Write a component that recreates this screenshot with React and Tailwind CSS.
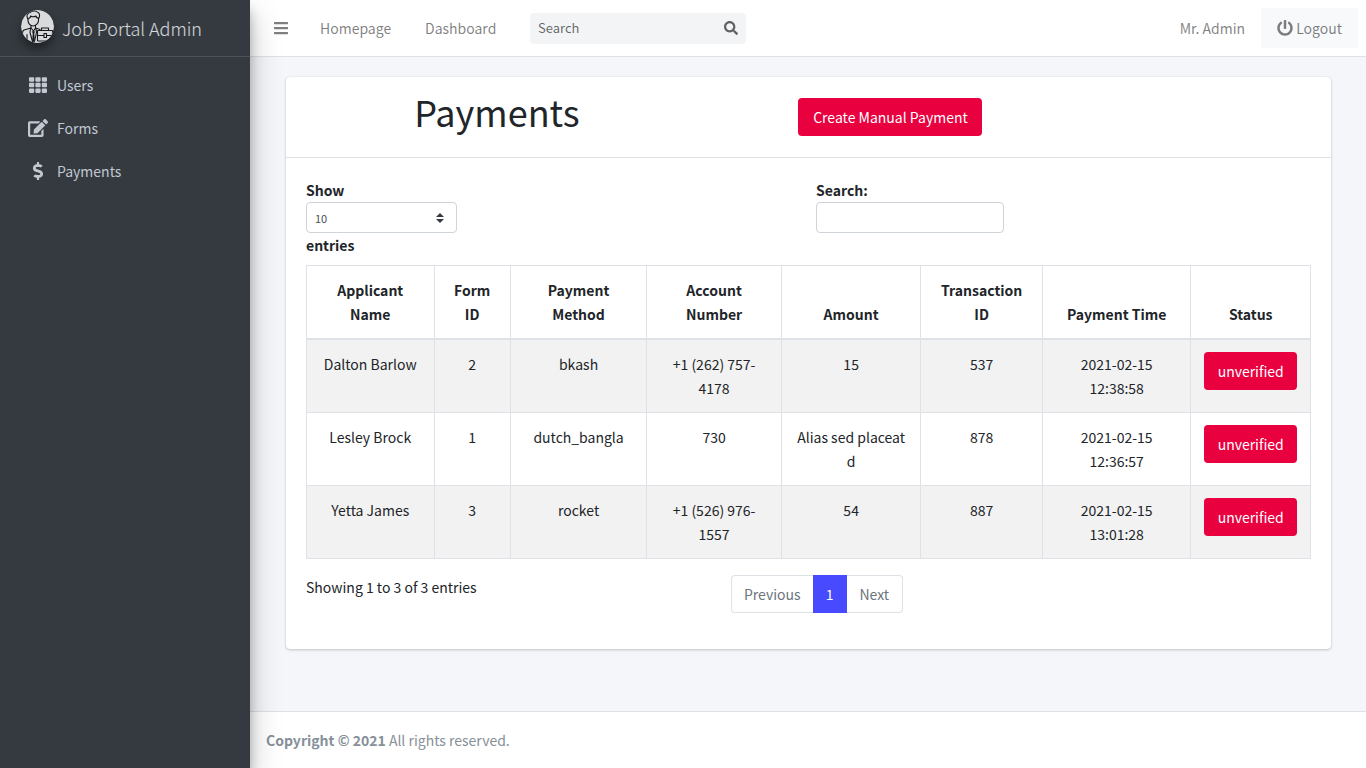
import React from "react";
import { FaBars, FaDollarSign, FaEdit, FaPowerOff, FaSearch, FaTh } from "react-icons/fa";

const NAV = [
  { label: "Users", Icon: FaTh, size: "size-[18px]" },
  { label: "Forms", Icon: FaEdit, size: "size-5" },
  { label: "Payments", Icon: FaDollarSign, size: "size-[18px]" },
];

const COLUMNS = [
  { label: "Applicant Name", width: "w-[12.7%]" },
  { label: "Form ID", width: "w-[7.6%]" },
  { label: "Payment Method", width: "w-[13.6%]" },
  { label: "Account Number", width: "w-[13.4%]" },
  { label: "Amount", width: "w-[13.9%]" },
  { label: "Transaction ID", width: "w-[12.1%]" },
  { label: "Payment Time", width: "w-[14.8%]" },
  { label: "Status", width: "w-[11.9%]" },
];

const ROWS = [
  ["Dalton Barlow", "2", "bkash", "+1 (262) 757-4178", "15", "537", "2021-02-15 12:38:58"],
  ["Lesley Brock", "1", "dutch_bangla", "730", "Alias sed placeat d", "878", "2021-02-15 12:36:57"],
  ["Yetta James", "3", "rocket", "+1 (526) 976-1557", "54", "887", "2021-02-15 13:01:28"],
];

function Logo() {
  return (
    <svg viewBox="0 0 66 66" className="size-[33px] shrink-0 rounded-full shadow-[0_6px_10px_rgba(0,0,0,0.4)]" aria-hidden="true">
      <defs>
        <clipPath id="logo-disc">
          <circle cx="33" cy="33" r="33" />
        </clipPath>
      </defs>
      <g clipPath="url(#logo-disc)" fill="none" stroke="#15181b" strokeWidth="2.2" strokeLinecap="round" strokeLinejoin="round">
        <rect width="66" height="66" fill="#d8dadc" stroke="none" />
        <path d="M14 18c-4-6-2-12 4-13 4-4 13-4 16 0 4 1 4 8 1 13" />
        <path d="M14 17v4c0 6 5 11 10 11s11-5 11-11v-5c-3 0-5-2-5-4-4 2-8 2-11 0 0 3-2 5-5 5z" />
        <path d="M20 31v5L6 40c-2 1-3 3-3 6v20M29 31v5l9 3" />
        <path d="M20 36l5 6 4-6M19 37l-1 8 5 18M30 37l1 8-4 18M12 49v17" />
        <path d="M23 43h4l-1 5 1 12-2 4-2-4 1-12z" fill="#15181b" strokeWidth="1" />
        <rect x="33" y="41" width="30" height="21" rx="1" fill="#d8dadc" />
        <path d="M41 41v-5h14v5M33 51h13M51 51h12" />
        <rect x="46" y="47" width="5" height="8" fill="#d8dadc" />
      </g>
    </svg>
  );
}

function Sidebar() {
  return (
    <aside className="z-10 w-[250px] shrink-0 bg-[#343a40] shadow-[0_14px_28px_rgba(0,0,0,0.25),0_10px_10px_rgba(0,0,0,0.22)]">
      <a href="#" className="flex h-[57px] items-start gap-2 border-b border-[#4b545c] pt-2.5 pl-[21px] text-lg/9 font-light text-white/80">
        <Logo />
        <span>Job Portal Admin</span>
      </a>
      <nav className="flex flex-col gap-[3px] p-2">
        {NAV.map(({ label, Icon, size }) => (
          <a key={label} href="#" className="flex h-10 items-center gap-1.5 pl-4 text-[#c2c7d0]">
            <span className="flex w-[27px] justify-center">
              <Icon className={size} />
            </span>
            {label}
          </a>
        ))}
      </nav>
    </aside>
  );
}

function Navbar() {
  return (
    <header className="flex h-[57px] items-center border-b border-[#dee2e6] bg-white px-2 text-black/50">
      <button type="button" aria-label="Toggle menu" className="flex w-[46px] justify-center">
        <FaBars className="size-4" />
      </button>
      <a href="#" className="w-[105px] pl-4">Homepage</a>
      <a href="#" className="w-[105px] pl-4">Dashboard</a>
      <form className="ml-4 flex h-[31px] w-[216px] rounded bg-[#f2f4f6]" onSubmit={(e) => e.preventDefault()}>
        <input
          type="search"
          aria-label="Search"
          placeholder="Search"
          className="min-w-0 flex-1 bg-transparent px-2 text-[13px]/5 outline-none placeholder:text-black/60"
        />
        <button type="submit" aria-label="Submit search" className="px-2 text-black/60">
          <FaSearch className="size-3.5" />
        </button>
      </form>
      <div className="ml-auto flex items-center">
        <a href="#" className="px-4">Mr. Admin</a>
        <button type="button" className="flex h-10 items-center gap-[3px] bg-[#f8f9fa] px-4">
          <FaPowerOff className="size-4" />
          Logout
        </button>
      </div>
    </header>
  );
}

function PaymentsTable() {
  return (
    <table className="w-full table-fixed border-collapse text-center">
      <thead>
        <tr>
          {COLUMNS.map(({ label, width }) => (
            <th key={label} className={`${width} border border-b-2 border-[#dee2e6] p-3 align-bottom font-bold`}>
              {label}
            </th>
          ))}
        </tr>
      </thead>
      <tbody>
        {ROWS.map((row) => (
          <tr key={row[0]} className="odd:bg-[#f2f2f2]">
            {row.map((cell, i) => (
              <td key={i} className="border border-[#dee2e6] p-3 align-top">{cell}</td>
            ))}
            <td className="border border-[#dee2e6] px-3 pt-3 align-top">
              <button type="button" className="h-[38px] w-[93px] rounded bg-[#e9003f] text-white">unverified</button>
            </td>
          </tr>
        ))}
      </tbody>
    </table>
  );
}

export default function App() {
  return (
    <div className="flex min-h-screen bg-[#f4f6f9] font-['Noto_Sans_CJK_SC',sans-serif] text-sm/6 text-[#212529]">
      <Sidebar />
      <div className="flex min-w-0 flex-1 flex-col">
        <Navbar />
        <main className="flex-1 pt-5 pr-[35px] pl-9">
          <section className="rounded bg-white shadow-[0_0_1px_rgba(0,0,0,0.13),0_1px_3px_rgba(0,0,0,0.2)]">
            <div className="flex items-center border-b border-black/12 px-5 py-3">
              <h1 className="mb-3 w-[38%] text-center text-4xl/11">Payments</h1>
              <button type="button" className="ml-[11%] h-[38px] w-[184px] rounded bg-[#e9003f] text-white">
                Create Manual Payment
              </button>
            </div>
            <div className="p-5">
              <div className="mb-2 grid grid-cols-2 gap-[15px] font-bold">
                <label className="flex flex-col items-start">
                  Show
                  <span className="relative">
                    <select className="h-[31px] w-[151px] appearance-none rounded border border-[#ced4da] bg-white px-2 text-[11px]/4 font-normal text-[#495057]">
                      <option>10</option>
                      <option>25</option>
                      <option>50</option>
                      <option>100</option>
                    </select>
                    <svg viewBox="0 0 4 5" className="pointer-events-none absolute top-[11px] right-[13px] h-[10px] w-2" aria-hidden="true">
                      <path fill="#343a40" d="M2 0L0 2h4zm0 5L0 3h4z" />
                    </svg>
                  </span>
                  entries
                </label>
                <label className="flex flex-col items-start">
                  Search:
                  <input type="search" className="h-[31px] w-[188px] rounded border border-[#ced4da] px-2 text-[13px]/5 font-normal" />
                </label>
              </div>
              <PaymentsTable />
              <div className="mt-4 mb-4 grid grid-cols-[5fr_7fr] items-start">
                <p>Showing 1 to 3 of 3 entries</p>
                <nav aria-label="Pages" className="ml-1.5 flex h-[38px] w-[172px] text-[#6c757d]">
                  <button type="button" className="flex-1 rounded-l border border-r-0 border-[#dee2e6]">Previous</button>
                  <button type="button" aria-current="page" className="w-[34px] bg-[#484aff] text-white">1</button>
                  <button type="button" className="w-14 rounded-r border border-l-0 border-[#dee2e6]">Next</button>
                </nav>
              </div>
            </div>
          </section>
        </main>
        <footer className="border-t border-[#dee2e6] bg-white p-4 text-[#869099]">
          <strong>Copyright © 2021</strong> All rights reserved.
        </footer>
      </div>
    </div>
  );
}
